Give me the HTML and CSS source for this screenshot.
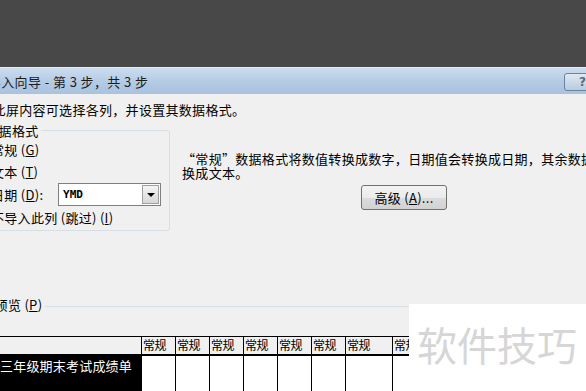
FILE: index.html
```html
<!DOCTYPE html>
<html lang="zh-CN">
<head>
  <meta charset="UTF-8" />
  <title>文本导入向导 - 第 3 步，共 3 步</title>
  <link rel="stylesheet" href="styles.css">
</head>
<body>
  <div class="backdrop"></div>

  <div class="dialog">
    <div class="titlebar">
      <span class="title">文本导入向导 - 第 3 步，共 3 步</span>
      <span class="help-btn">?</span>
    </div>

    <div class="content">
      <p class="intro">使用此屏内容可选择各列，并设置其数据格式。</p>

      <div class="format-row">
        <fieldset class="format-group">
          <legend>列数据格式</legend>
          <div class="options">
            <label class="opt"><span class="radio checked"></span>常规 (<u>G</u>)</label>
            <label class="opt"><span class="radio"></span>文本 (<u>T</u>)</label>
            <div class="opt date-row">
              <label><span class="radio"></span>日期 (<u>D</u>):</label>
              <div class="combo">
                <span class="combo-value">YMD</span>
                <span class="combo-arrow"></span>
              </div>
            </div>
            <label class="opt"><span class="radio"></span>不导入此列 (跳过) (<u>I</u>)</label>
          </div>
        </fieldset>

        <div class="format-info">
          <p>“常规”数据格式将数值转换成数字，日期值会转换成日期，其余数据则转换成文本。</p>
          <button class="adv-btn">高级 (<u>A</u>)...</button>
        </div>
      </div>

      <div class="preview-label"><span>数据预览 (<u>P</u>)</span><span class="rule"></span></div>

      <div class="preview">
        <div class="cell head first"></div>
        <div class="cell head">常规</div>
        <div class="cell head">常规</div>
        <div class="cell head">常规</div>
        <div class="cell head">常规</div>
        <div class="cell head">常规</div>
        <div class="cell head">常规</div>
        <div class="cell head">常规</div>
        <div class="cell head">常规</div>
        <div class="cell head">常规</div>

        <div class="cell data first">三年级期末考试成绩单</div>
        <div class="cell data"></div>
        <div class="cell data"></div>
        <div class="cell data"></div>
        <div class="cell data"></div>
        <div class="cell data"></div>
        <div class="cell data"></div>
        <div class="cell data"></div>
        <div class="cell data"></div>
        <div class="cell data"></div>
      </div>
    </div>
  </div>

  <div class="watermark">软件技巧</div>
</body>
</html>
```

FILE: styles.css
```css
html, body {
  margin: 0;
  padding: 0;
  height: 100%;
  overflow: hidden;
  background: #f0f0f0;
  font-family: "Noto Sans CJK SC", sans-serif;
  font-size: 13px;
  color: #000;
}

.backdrop {
  height: 67px;
  background: #484848;
}

/* dialog runs off the left and right of the shot */
.dialog {
  margin-left: -40px;
  width: 666px;
}

.titlebar {
  height: 27px;
  box-sizing: border-box;
  display: flex;
  align-items: center;
  padding-left: 1px;
  background: linear-gradient(#cbdcee, #b2c9e3 60%, #a9c2df);
  border-top: 1px solid #e4ecf5;
}

.title {
  flex: 1;
  font-size: 13px;
  color: #1b1b1b;
  letter-spacing: 0.4px;
}

.help-btn {
  width: 26px;
  height: 18px;
  margin-right: 36px;
  margin-top: 1px;
  box-sizing: border-box;
  border: 1px solid #6d829c;
  border-radius: 3px;
  background: linear-gradient(#dfe8f2, #b8cbe0);
  font-family: "DejaVu Sans", sans-serif;
  font-size: 12px;
  font-weight: bold;
  line-height: 16px;
  text-align: right;
  padding-right: 3px;
  color: #5a6a7c;
}

.content {
  padding-left: 6px;
  letter-spacing: 0.3px;
}

.intro {
  margin: 8px 0 0;
  line-height: 15px;
}

.format-row {
  display: flex;
  align-items: flex-start;
  margin-top: 6px;
}

.format-group {
  margin: 0;
  padding: 0;
  width: 205px;
  box-sizing: border-box;
  border: 1px solid #d5dfe5;
  border-radius: 3px;
}

.format-group legend {
  padding: 0 2px;
  margin-left: 3px;
  line-height: 15px;
}

.options {
  padding: 0 8px 2px 6px;
}

.opt {
  display: flex;
  align-items: center;
  height: 22px;
}

.opt:last-child {
  height: 21px;
}

.radio {
  width: 11px;
  height: 11px;
  margin-right: 5px;
  border: 1px solid #8a8a8a;
  border-radius: 50%;
  background: #fff;
  flex: none;
}

.radio.checked {
  background: radial-gradient(#2a5ea8 35%, #fff 45%);
}

.date-row {
  height: 25px;
  justify-content: space-between;
}

.date-row label {
  display: flex;
  align-items: center;
}

.combo {
  width: 103px;
  height: 23px;
  box-sizing: border-box;
  border: 1px solid #7f7f7f;
  background: #fff;
  display: flex;
  align-items: center;
  justify-content: space-between;
}

.combo-value {
  padding-left: 4px;
  font-family: "DejaVu Sans Mono", monospace;
  font-size: 11px;
  font-weight: bold;
  letter-spacing: 0;
}

.combo-arrow {
  width: 17px;
  height: 19px;
  margin-right: 1px;
  box-sizing: border-box;
  border: 1px solid #a0a0a0;
  background: linear-gradient(#f4f4f4, #d8d8d8);
  position: relative;
}

.combo-arrow::after {
  content: "";
  position: absolute;
  left: 4px;
  top: 7px;
  border-left: 4px solid transparent;
  border-right: 4px solid transparent;
  border-top: 4px solid #000;
}

.format-info {
  width: 446px;
  margin: 29px 0 0 12px;
  display: flex;
  flex-direction: column;
}

.format-info p {
  margin: 0;
  width: 442px;
  line-height: 14px;
}

.adv-btn {
  align-self: center;
  margin-top: 5px;
  width: 86px;
  height: 25px;
  padding: 0;
  border: 1px solid #707070;
  border-radius: 3px;
  background: linear-gradient(#f3f3f3, #ebebeb 50%, #dcdcdc 51%, #d2d2d2);
  font-family: inherit;
  font-size: 13px;
  letter-spacing: 0.3px;
  color: #000;
}

.preview-label {
  display: flex;
  align-items: center;
  margin-top: 66px;
  padding-left: 2px;
  line-height: 15px;
}

.preview-label .rule {
  flex: 1;
  margin: 4px 0 0 3px;
  border-top: 1px solid #d5dfe5;
}

.preview {
  margin-top: 24px;
  display: grid;
  grid-template-columns: 175px repeat(6, 34px) 47px 47px 47px;
  grid-template-rows: 20px 40px;
  letter-spacing: 0;
}

.cell {
  box-sizing: border-box;
  border-left: 1px solid #000;
  white-space: nowrap;
  overflow: hidden;
}

.cell.first {
  border-left: none;
}

.cell.head {
  border-top: 1px solid #000;
  border-bottom: 2px solid #000;
  font-size: 12px;
  line-height: 16px;
  padding-left: 1px;
  letter-spacing: -0.6px;
}

.cell.data {
  background: #fff;
}

.cell.data.first {
  background: #000;
  color: #fff;
  line-height: 15px;
  padding: 2px 0 0 34px;
  letter-spacing: 0.2px;
}

.watermark {
  position: absolute;
  left: 409px;
  top: 304px;
  right: 0;
  bottom: 0;
  background: #fff;
  padding: 18px 0 0 8px;
  font-size: 40px;
  line-height: 44px;
  color: #d6d6d6;
  white-space: nowrap;
}
```
